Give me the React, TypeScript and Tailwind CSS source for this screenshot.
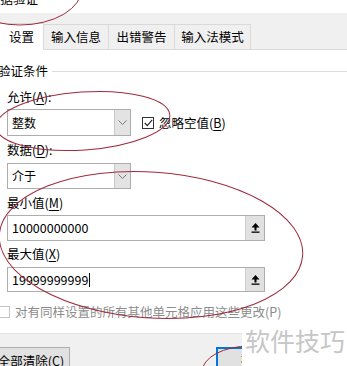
import React from 'react';

const tabs = [
    { label: '设置', width: 'w-[44px]', active: true },
    { label: '输入信息', width: 'w-[65px]', active: false },
    { label: '出错警告', width: 'w-[66px]', active: false },
    { label: '输入法模式', width: 'w-[76px]', active: false },
];

const Key: React.FC<{ label: string; hot: string; colon?: boolean }> = ({ label, hot, colon }) => (
    <span>
        {label}(<span className="underline underline-offset-2">{hot}</span>){colon ? ':' : ''}
    </span>
);

const Chevron = () => (
    <svg width="9" height="5" viewBox="0 0 9 5" className="text-[#7a7a7a]">
        <path d="M0.5 0.5 L4.5 4.5 L8.5 0.5" fill="none" stroke="currentColor" strokeWidth="1" />
    </svg>
);

const RangeIcon = () => (
    <svg width="9" height="10" viewBox="0 0 9 10">
        <path d="M4.5 0 L8.5 4.5 L5.5 4.5 L5.5 7.5 L3.5 7.5 L3.5 4.5 L0.5 4.5 Z" fill="#000" />
        <rect x="0.5" y="8.5" width="8" height="1.3" fill="#000" />
    </svg>
);

const SelectBox: React.FC<{ value: string; h: string }> = ({ value, h }) => (
    <div className={`flex w-[124px] ${h} border border-[#adadad] bg-white`}>
        <div className="flex-1 flex items-center pl-[4px] text-[12px]">{value}</div>
        <div className="w-[16px] bg-[#e3e3e3] border-l border-[#c8c8c8] flex items-center justify-center">
            <Chevron />
        </div>
    </div>
);

const RefInput: React.FC<{ value: string; h: string; caret?: boolean }> = ({ value, h, caret }) => (
    <div className={`flex w-[258px] ${h} border border-[#adadad] bg-white`}>
        <div className="flex-1 flex items-center pl-[4px] text-[12.5px]">
            {value}
            {caret && <span className="inline-block w-px h-[14px] bg-black ml-px" />}
        </div>
        <div className="w-[19px] bg-[#e1e1e1] border-l border-[#d0d0d0] flex items-center justify-center">
            <RangeIcon />
        </div>
    </div>
);

export default function App() {
    return (
        <div
            className="relative w-[347px] h-[366px] overflow-hidden bg-white text-black"
            style={{ fontFamily: '"Noto Sans CJK SC", "Noto Sans", sans-serif' }}
        >
            {/* title bar */}
            <div className="h-[13px] overflow-hidden bg-white">
                <div className="-mt-[9px] -ml-[12px] text-[12.5px] leading-[16px]">数据验证</div>
            </div>

            {/* tab strip */}
            <div className="h-[37px] bg-[#f0f0f0] flex items-end">
                {tabs.map((t) => (
                    <div
                        key={t.label}
                        className={
                            t.active
                                ? `${t.width} h-[27px] bg-white border-r border-t border-[#d9d9d9] flex items-center justify-center text-[12.5px]`
                                : `${t.width} h-[26px] bg-[#f0f0f0] border-r border-t border-b border-[#d9d9d9] flex items-center justify-center text-[12.5px]`
                        }
                    >
                        {t.label}
                    </div>
                ))}
                <div className="flex-1 border-b border-[#d9d9d9]" />
            </div>

            {/* settings panel */}
            <div className="h-[283px] flex flex-col text-[12.5px] leading-[16px]">
                <div className="mt-[13px] flex items-center -ml-[2px]">
                    <span>验证条件</span>
                    <div className="flex-1 h-px bg-[#dcdcdc] ml-[4px]" />
                </div>

                <div className="pl-[7px] flex flex-col">
                    <div className="mt-[10px]"><Key label="允许" hot="A" colon /></div>
                    <div className="mt-[4px] flex items-center">
                        <SelectBox value="整数" h="h-[27px]" />
                        <div className="ml-[11px] w-[12px] h-[12px] border border-[#333] flex items-center justify-center">
                            <svg width="9" height="8" viewBox="0 0 9 8">
                                <path d="M0.8 4 L3.3 6.6 L8.2 0.8" fill="none" stroke="#222" strokeWidth="1.1" />
                            </svg>
                        </div>
                        <span className="ml-[5px]"><Key label="忽略空值" hot="B" /></span>
                    </div>

                    <div className="mt-[6px]"><Key label="数据" hot="D" colon /></div>
                    <div className="mt-[5px]"><SelectBox value="介于" h="h-[26px]" /></div>

                    <div className="mt-[6px]"><Key label="最小值" hot="M" /></div>
                    <div className="mt-[4px]"><RefInput value="10000000000" h="h-[26px]" /></div>

                    <div className="mt-[5px]"><Key label="最大值" hot="X" /></div>
                    <div className="mt-[5px]"><RefInput value="19999999999" h="h-[25px]" caret /></div>
                </div>

                <div className="mt-[12px] flex items-center -ml-[2px] text-[#8c8c8c]">
                    <div className="w-[12px] h-[12px] border border-[#c4c4c4]" />
                    <span className="ml-[5px]">对有同样设置的所有其他单元格应用这些更改(P)</span>
                </div>
            </div>

            {/* button bar */}
            <div className="h-[33px] bg-[#f0f0f0] border-t border-[#e3e3e3] flex items-start pt-[13px]">
                <div className="-ml-[8px] w-[78px] h-[24px] border border-[#adadad] bg-[#e1e1e1] flex justify-center pt-[5px] text-[12.5px] leading-[16px]">
                    全部清除(<span className="underline underline-offset-2">C</span>)
                </div>
                <div className="ml-[146px] w-[75px] h-[24px] border-2 border-[#0078d7] bg-[#e1e1e1] flex justify-center pt-[4px] text-[12.5px] leading-[16px]">
                    确定
                </div>
            </div>

            {/* hand-drawn annotations */}
            <svg className="absolute inset-0 pointer-events-none" width="347" height="366" viewBox="0 0 347 366">
                <g fill="none" stroke="#9e2a3c" strokeWidth="1">
                    <ellipse cx="20" cy="-12" rx="62" ry="37" />
                    <ellipse cx="83" cy="121" rx="87" ry="29" transform="rotate(-4 83 121)" />
                    <ellipse cx="151" cy="245" rx="152" ry="73" transform="rotate(4 151 245)" />
                    <ellipse cx="250" cy="372" rx="48" ry="26" />
                </g>
            </svg>

            {/* watermark */}
            <div className="absolute left-[242px] top-[321px] w-[105px] h-[45px] bg-white pl-[3px] whitespace-nowrap text-[25px] leading-[38px] text-[#c6c6c6]">
                软件技巧
            </div>
        </div>
    );
}
